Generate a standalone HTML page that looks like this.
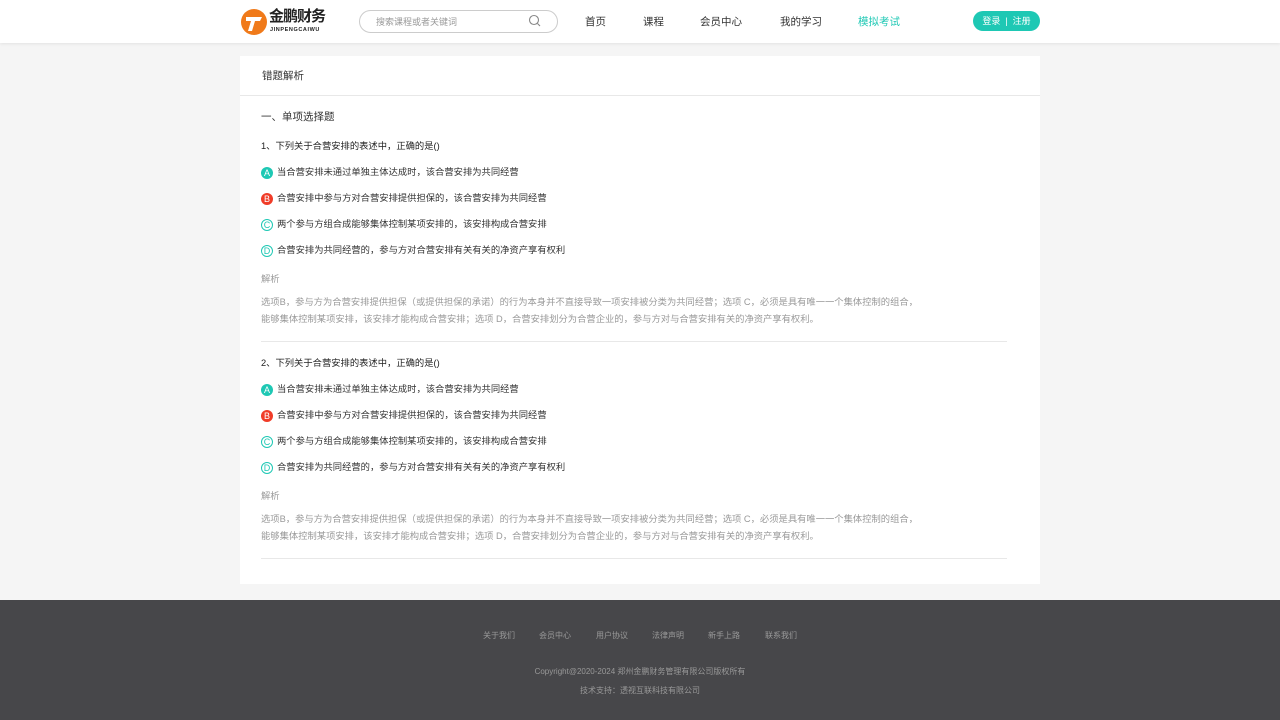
<!DOCTYPE html>
<html><head><meta charset="utf-8"><style>
*{margin:0;padding:0;box-sizing:border-box}
body{width:1280px;height:720px;background:#f5f5f5;font-family:"Liberation Sans","Noto Sans CJK SC",sans-serif;position:relative;overflow:hidden;color:#333}
.hd{position:absolute;top:0;left:0;width:1280px;height:43px;background:#fff;box-shadow:0 1px 3px rgba(0,0,0,.08)}
.a{position:absolute;white-space:nowrap}
.card{position:absolute;left:240px;top:56px;width:800px;height:528px;background:#fff}
.t11{font-size:9.3px}
.ic{display:inline-block;width:12px;height:12px;border-radius:50%;font-size:9px;line-height:12px;text-align:center;color:#fff;margin-right:4px;vertical-align:-1px}
.ft{position:absolute;top:600px;left:0;width:1280px;height:120px;background:#47474a;color:#999;font-size:8px}
</style></head><body>
<div class="hd">
<svg class="a" style="left:240px;top:8px" width="28" height="28" viewBox="0 0 28 28"><circle cx="14" cy="14" r="13" fill="#f07a1a"/><path d="M6 9h16l-2 4h-5l-3 10H8l3-10H6z" fill="#fff"/></svg>
<div class="a" style="left:269px;top:5px;font-size:15px;font-weight:bold;color:#222;letter-spacing:-1px">金鹏财务</div>
<div class="a" style="left:270px;top:27px;font-size:5.5px;font-weight:bold;color:#222;letter-spacing:.6px">JINPENGCAIWU</div>
<div class="a" style="left:359px;top:10px;width:199px;height:23px;border:1px solid #ccc;border-radius:12px"></div>
<div class="a" style="left:376px;top:15px;font-size:9px;color:#999">搜索课程或者关键词</div>
<svg class="a" style="left:528px;top:14px" width="13" height="13" viewBox="0 0 13 13"><circle cx="6" cy="6" r="4.5" fill="none" stroke="#888" stroke-width="1.1"/><path d="M9.5 9.5l2.5 2.5" stroke="#888" stroke-width="1.1"/></svg>
<div class="a" style="left:585px;top:14px;font-size:10.5px">首页</div>
<div class="a" style="left:643px;top:14px;font-size:10.5px">课程</div>
<div class="a" style="left:700px;top:14px;font-size:10.5px">会员中心</div>
<div class="a" style="left:780px;top:14px;font-size:10.5px">我的学习</div>
<div class="a" style="left:858px;top:14px;font-size:10.5px;color:#1ec8b4">模拟考试</div>
<div class="a" style="left:973px;top:11px;width:67px;height:20px;border-radius:10px;background:#1ec8b4;color:#fff;font-size:9px;line-height:20px;text-align:center">登录 &nbsp;|&nbsp; 注册</div>
</div>
<div class="card">
<div class="a" style="left:22px;top:12px;font-size:10.5px">错题解析</div>
<div class="a" style="left:0;top:39px;width:800px;height:1px;background:#e8e8e8"></div>
<div class="a" style="left:21px;top:53px;font-size:10.5px">一、单项选择题</div>
</div>
<div class="a t11" style="left:261px;top:138px;color:#222">1、下列关于合营安排的表述中，正确的是()</div>
<div class="a t11" style="left:261px;top:164px"><span class="ic" style="background:#1ec8b4">A</span>当合营安排未通过单独主体达成时，该合营安排为共同经营</div>
<div class="a t11" style="left:261px;top:190px"><span class="ic" style="background:#f03c28">B</span>合营安排中参与方对合营安排提供担保的，该合营安排为共同经营</div>
<div class="a t11" style="left:261px;top:216px"><span class="ic" style="border:1px solid #1ec8b4;color:#1ec8b4;line-height:10px">C</span>两个参与方组合成能够集体控制某项安排的，该安排构成合营安排</div>
<div class="a t11" style="left:261px;top:242px"><span class="ic" style="border:1px solid #1ec8b4;color:#1ec8b4;line-height:10px">D</span>合营安排为共同经营的，参与方对合营安排有关有关的净资产享有权利</div>
<div class="a t11" style="left:261px;top:271px;color:#999">解析</div>
<div class="a t11" style="left:261px;top:294px;color:#999;line-height:17px">选项B，参与方为合营安排提供担保（或提供担保的承诺）的行为本身并不直接导致一项安排被分类为共同经营；选项 C，必须是具有唯一一个集体控制的组合，<br>能够集体控制某项安排，该安排才能构成合营安排；选项 D，合营安排划分为合营企业的，参与方对与合营安排有关的净资产享有权利。</div>
<div class="a" style="left:261px;top:341px;width:746px;height:1px;background:#e8e8e8"></div>
<div class="a t11" style="left:261px;top:355px;color:#222">2、下列关于合营安排的表述中，正确的是()</div>
<div class="a t11" style="left:261px;top:381px"><span class="ic" style="background:#1ec8b4">A</span>当合营安排未通过单独主体达成时，该合营安排为共同经营</div>
<div class="a t11" style="left:261px;top:407px"><span class="ic" style="background:#f03c28">B</span>合营安排中参与方对合营安排提供担保的，该合营安排为共同经营</div>
<div class="a t11" style="left:261px;top:433px"><span class="ic" style="border:1px solid #1ec8b4;color:#1ec8b4;line-height:10px">C</span>两个参与方组合成能够集体控制某项安排的，该安排构成合营安排</div>
<div class="a t11" style="left:261px;top:459px"><span class="ic" style="border:1px solid #1ec8b4;color:#1ec8b4;line-height:10px">D</span>合营安排为共同经营的，参与方对合营安排有关有关的净资产享有权利</div>
<div class="a t11" style="left:261px;top:488px;color:#999">解析</div>
<div class="a t11" style="left:261px;top:511px;color:#999;line-height:17px">选项B，参与方为合营安排提供担保（或提供担保的承诺）的行为本身并不直接导致一项安排被分类为共同经营；选项 C，必须是具有唯一一个集体控制的组合，<br>能够集体控制某项安排，该安排才能构成合营安排；选项 D，合营安排划分为合营企业的，参与方对与合营安排有关的净资产享有权利。</div>
<div class="a" style="left:261px;top:558px;width:746px;height:1px;background:#e8e8e8"></div>
<div class="ft">
<div class="a" style="left:483px;top:30px">关于我们</div>
<div class="a" style="left:539px;top:30px">会员中心</div>
<div class="a" style="left:596px;top:30px">用户协议</div>
<div class="a" style="left:652px;top:30px">法律声明</div>
<div class="a" style="left:708px;top:30px">新手上路</div>
<div class="a" style="left:765px;top:30px">联系我们</div>
<div class="a" style="left:0;width:1280px;text-align:center;top:66px">Copyright@2020-2024 郑州金鹏财务管理有限公司版权所有</div>
<div class="a" style="left:0;width:1280px;text-align:center;top:85px">技术支持：透视互联科技有限公司</div>
</div>
</body></html>
